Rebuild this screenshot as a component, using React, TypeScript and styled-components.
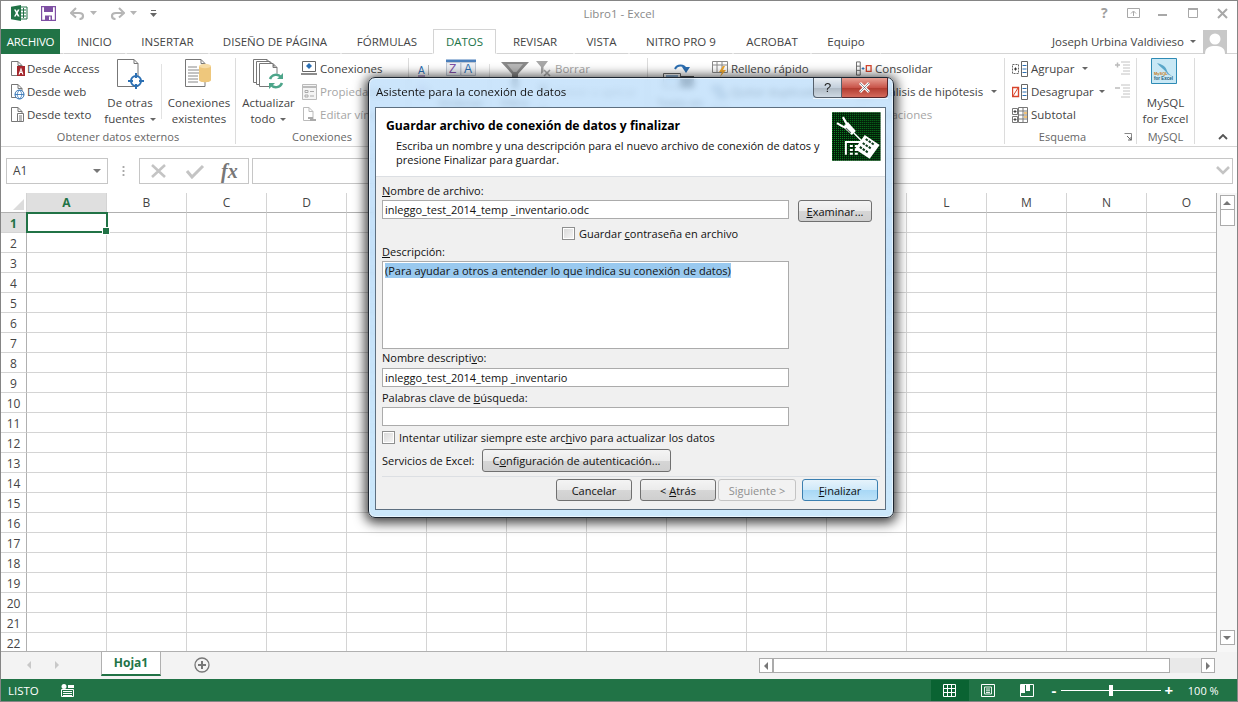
import React from "react";
import styled, { createGlobalStyle } from "styled-components";

const Global = createGlobalStyle`
  html, body { margin: 0; padding: 0; background: #fff; }
  * { box-sizing: border-box; }
  #root { width: 1238px; height: 702px; }
`;

const UI = `"Open Sans", "Noto Sans", "Liberation Sans", sans-serif`;

const Page = styled.div`
  position: relative; width: 1238px; height: 702px; overflow: hidden;
  border: 1px solid #858585; display: flex; flex-direction: column; background: #fff;
  font-family: ${UI}; font-size: 11.5px; color: #444;
`;
const TitleBar = styled.div`
  height: 24px; flex: none; display: grid; grid-template-columns: 1fr auto 1fr; align-items: center;
`;
const Qat = styled.div`display: flex; align-items: center; padding-left: 10px; height: 100%;`;
const QatSlot = styled.span<{ $w: number }>`width: ${p => p.$w}px; display: flex; align-items: center; flex: none;`;
const AppTitle = styled.div`color: #8a8a8a; font-size: 11.5px;`;
const WinControls = styled.div`display: flex; justify-content: flex-end; align-items: center; height: 100%;`;
const WinSlot = styled.span`width: 29.5px; display: flex; justify-content: center; align-items: center; color: #a0a0a0;`;
const HelpGlyph = styled.span`font-weight: 700; font-size: 14px; line-height: 1;`;

const TabRow = styled.div`
  height: 29px; flex: none; display: flex; align-items: flex-end; border-bottom: 1px solid #d4d4d4; position: relative;
`;
const FileTab = styled.div`
  width: 59px; height: 25px; margin-bottom: -1px; background: #217346; color: #fff; margin-right: 3px;
  display: flex; align-items: center; justify-content: center; font-size: 11.5px; letter-spacing: -.2px;
`;
const Tab = styled.div<{ $w: number; $active?: boolean }>`
  width: ${p => p.$w}px; height: 25px; margin-bottom: -1px; flex: none;
  display: flex; align-items: center; justify-content: center; font-size: 11.5px; color: ${p => (p.$active ? "#217346" : "#444")};
  background: #fff;
  border: 1px solid ${p => (p.$active ? "#d4d4d4" : "transparent")};
  border-bottom: 1px solid ${p => (p.$active ? "#fff" : "#d4d4d4")};
`;
const User = styled.div`
  margin-left: auto; display: flex; align-items: center; height: 25px; margin-bottom: -1px; padding-right: 10px; gap: 1px; color: #444; font-size: 11.5px;
`;
const Avatar = styled.div`width: 24px; height: 24px; background: #c8c8c8; overflow: hidden; margin-left: 6px;`;

const Ribbon = styled.div`
  height: 93px; flex: none; display: flex; border-bottom: 1px solid #d4d4d4; padding-top: 4px; background: #fff;
`;
const Group = styled.div<{ $w: number }>`
  width: ${p => p.$w}px; flex: none; display: flex; flex-direction: column; height: 86px; border-right: 1px solid #dcdcdc;
`;
const GroupBody = styled.div<{ $pad?: number }>`
  height: 71px; display: flex; padding-left: ${p => p.$pad ?? 0}px;
`;
const GroupLabel = styled.div<{ $pr?: number }>`
  height: 15px; line-height: 15px; text-align: center; color: #666; font-size: 11px; position: relative; white-space: nowrap; padding-right: ${p => p.$pr ?? 0}px;
`;
const Launcher = styled.span`position: absolute; right: 4px; top: 4px; display: flex;`;
const SmallCol = styled.div<{ $w: number }>`width: ${p => p.$w}px; flex: none; display: flex; flex-direction: column; margin-top: -1px;`;
const SmallItem = styled.div<{ $off?: boolean; $gap?: number }>`
  height: 23px; display: flex; align-items: center; gap: ${p => p.$gap ?? 3}px; white-space: nowrap; color: ${p => (p.$off ? "#a6a6a6" : "#444")};
`;
const Caret = styled.span<{ $ml?: number }>`
  display: inline-block; width: 0; height: 0; border: 3px solid transparent; border-top: 3px solid #666; border-bottom: 0; margin-left: ${p => p.$ml ?? 5}px; vertical-align: middle;
`;
const IconBox = styled.span`width: 16px; height: 17px; flex: none; display: flex; align-items: center; justify-content: center;`;
const Big = styled.div<{ $w: number; $off?: boolean }>`
  width: ${p => p.$w}px; flex: none; display: flex; flex-direction: column; align-items: center; line-height: 16px; text-align: center; white-space: nowrap;
  color: ${p => (p.$off ? "#a6a6a6" : "#444")};
`;
const BigIcon = styled.span<{ $shift?: number }>`height: 37px; display: flex; align-items: flex-start; justify-content: center; margin-right: ${p => p.$shift ?? 0}px;`;
const Thin = styled.div<{ $ml: number; $mr?: number }>`
  width: 1px; height: 55px; margin: 6px ${p => p.$mr ?? 0}px 0 ${p => p.$ml}px; background: #e2e2e2; flex: none;
`;
const Collapse = styled.div`margin-left: auto; align-self: flex-end; margin-right: 9px; margin-bottom: 3px;`;

const FormulaBar = styled.div`
  height: 46px; flex: none; display: flex; align-items: center; padding-left: 5px; padding-top: 1px; background: #fff;
`;
const NameBox = styled.div`
  width: 102px; height: 26px; background: #fff; border: 1px solid #c6c6c6; display: flex; align-items: center; justify-content: space-between; padding: 0 6px 0 6px; font-size: 12px;
`;
const Dots = styled.div`
  width: 3px; height: 11px; margin: 0 14px 0 14px; background: radial-gradient(circle, #a8a8a8 1px, transparent 1.2px) 0 0 / 3px 4px;
`;
const FxBox = styled.div`
  width: 110px; height: 26px; border: 1px solid #c6c6c6; display: flex; align-items: center; justify-content: space-around; padding: 0 2px; margin-right: 3px; flex: none;
`;
const FxText = styled.span`font-family: "Liberation Serif", serif; font-style: italic; font-weight: 700; font-size: 20px; color: #777; line-height: 1;`;
const FormulaInput = styled.div`
  width: 981px; height: 26px; border: 1px solid #c6c6c6; display: flex; align-items: center; justify-content: flex-end; padding-right: 2px; flex: none;
`;

const SheetArea = styled.div`height: 459px; flex: none; display: flex;`;
const Sheet = styled.div`
  width: 1216px; height: 459px; overflow: hidden; position: relative; display: grid; grid-template-columns: 26px repeat(15, 80px); grid-auto-rows: 20px;
  border-bottom: 1px solid #b0b0b0; border-right: 1px solid #b0b0b0; color: #444;
`;
const Corner = styled.div`
  border-bottom: 1px solid #b0b0b0; border-right: 1px solid #d4d4d4; position: relative;
  &::after { content: ""; position: absolute; right: 2px; bottom: 2px; width: 0; height: 0; border-style: solid; border-width: 0 0 11px 11px; border-color: transparent transparent #dcdcdc transparent; }
`;
const ColHead = styled.div<{ $sel?: boolean }>`
  display: flex; align-items: center; justify-content: center; font-size: 12px;
  background: ${p => (p.$sel ? "#dfdfdf" : "#fff")}; color: ${p => (p.$sel ? "#217346" : "#444")}; font-weight: ${p => (p.$sel ? 700 : 400)};
  border-right: 1px solid #d4d4d4; border-bottom: 1px solid ${p => (p.$sel ? "#217346" : "#b0b0b0")};
`;
const RowHead = styled.div<{ $sel?: boolean }>`
  display: flex; align-items: center; justify-content: center; font-size: 12px; padding-top: 1px;
  background: ${p => (p.$sel ? "#dfdfdf" : "#fff")}; color: ${p => (p.$sel ? "#217346" : "#444")}; font-weight: ${p => (p.$sel ? 700 : 400)};
  border-right: 1px solid ${p => (p.$sel ? "#217346" : "#b0b0b0")}; border-bottom: 1px solid #d4d4d4;
`;
const Cell = styled.div`border-right: 1px solid #d4d4d4; border-bottom: 1px solid #d4d4d4;`;
const ActiveCell = styled.div`
  position: relative; border: 2px solid #217346; margin: -1px 0 0 -1px; width: 82px; height: 21px; z-index: 1;
  &::after { content: ""; position: absolute; right: -4px; bottom: -4px; width: 6px; height: 6px; background: #217346; border: 1px solid #fff; }
`;
const VScroll = styled.div`
  width: 20px; height: 459px; display: flex; flex-direction: column; align-items: center; padding: 2px 0 7px; background: #f7f7f7;
`;
const ScrollBtn = styled.div<{ $h?: number; $w?: number }>`
  width: ${p => p.$w ?? 15}px; height: ${p => p.$h ?? 15}px; border: 1px solid #ababab; background: #fff; display: flex; align-items: center; justify-content: center; flex: none;
`;
const VThumb = styled.div`width: 15px; flex: none; border: 1px solid #ababab; border-top: 0; background: #fff; height: 16px;`;
const VTrack = styled.div`flex: 1;`;
const ArrowU = styled.span`width: 0; height: 0; border: 4px solid transparent; border-bottom: 4px solid #777; border-top: 0;`;
const ArrowD = styled.span`width: 0; height: 0; border: 4px solid transparent; border-top: 4px solid #777; border-bottom: 0;`;
const ArrowL = styled.span<{ $c?: string }>`width: 0; height: 0; border: 4px solid transparent; border-right: 4px solid ${p => p.$c ?? "#777"}; border-left: 0;`;
const ArrowR = styled.span<{ $c?: string }>`width: 0; height: 0; border: 4px solid transparent; border-left: 4px solid ${p => p.$c ?? "#777"}; border-right: 0;`;

const TabBar = styled.div`
  height: 27px; flex: none; display: flex; align-items: flex-start; background: #f3f3f3;
`;
const NavArrows = styled.div`width: 100px; height: 25px; display: flex; align-items: center; gap: 24px; padding-left: 26px;`;
const SheetTab = styled.div`
  width: 60px; height: 25px; background: #fff; border-left: 1px solid #b0b0b0; border-right: 1px solid #b0b0b0; border-bottom: 2px solid #217346; margin-top: -1px;
  color: #217346; font-weight: 700; font-size: 12px; display: flex; align-items: center; justify-content: center;
`;
const AddSheet = styled.div`width: 84px; height: 25px; display: flex; align-items: center; padding-left: 33px;`;
const HScrollWrap = styled.div`
  margin-left: 514px; margin-top: 5px; display: flex; align-items: center; height: 17px;
`;
const HTrack = styled.div`width: 397px; height: 15px; background: #fff; border: 1px solid #ababab;`;
const HRest = styled.div`width: 31px; height: 15px; background: #e9e9e9;`;

const Status = styled.div`
  height: 22px; flex: none; background: #217346; color: #fff; display: flex; align-items: center; padding-left: 7px; font-size: 11.5px;
`;
const StatusIcon = styled.span`margin-left: 22px; display: flex;`;
const ViewBtn = styled.div<{ $on?: boolean; $ml: number; $w: number }>`
  width: ${p => p.$w}px; height: 21px; margin-left: ${p => p.$ml}px; display: flex; align-items: center; justify-content: center; background: ${p => (p.$on ? "#0a6332" : "transparent")}; flex: none;
`;
const Slider = styled.div`width: 100px; height: 1px; background: #fff; position: relative; margin: 0 3px 0 2px; flex: none;`;
const Thumb = styled.span`position: absolute; left: 48px; top: -5px; width: 4px; height: 11px; background: #fff;`;
const ZoomSign = styled.span<{ $ml?: number }>`font-weight: 700; font-size: 15px; line-height: 1; width: 10px; text-align: center; flex: none; margin-left: ${p => p.$ml ?? 0}px;`;
const ZoomVal = styled.span`margin-left: 14px; font-size: 11px; white-space: nowrap;`;

/* dialog */
const Dialog = styled.div`
  position: absolute; left: 367px; top: 76px; width: 526px; height: 441px; z-index: 5;
  border: 1px solid #1c2530; border-radius: 7px;
  background: linear-gradient(180deg, rgba(186,220,250,.74), rgba(176,214,246,.74) 40%, rgba(196,228,250,.88));
  backdrop-filter: blur(3px);
  box-shadow: 0 2px 12px 3px rgba(0,0,0,.75), inset 0 0 0 1px rgba(255,255,255,.55);
  padding: 0 7px 7px 6px; display: flex; flex-direction: column;
`;
const DialogTitle = styled.div`
  height: 29px; flex: none; display: flex; justify-content: space-between; color: #111; font-size: 11.5px;
`;
const DialogTitleText = styled.span`padding-top: 6px; padding-left: 1px;`;
const Caption = styled.div`display: flex; height: 20px; margin-right: -2px; box-shadow: 0 1px 0 rgba(255,255,255,.7);`;
const HelpBtn = styled.div`
  width: 29px; height: 20px; background: linear-gradient(#e8eef4, #c4d0dc 50%, #aeb9c4 52%, #cfd9e3); border: 1px solid #55606c; border-top: 0; border-radius: 0 0 0 4px;
  color: #222; font-size: 13px; display: flex; align-items: center; justify-content: center; font-family: "Liberation Sans", sans-serif;
`;
const CloseBtn = styled.div`
  width: 46px; height: 20px; background: linear-gradient(#e8a094, #c9554a 50%, #b03a2e 52%, #d46a5c); border: 1px solid #55252a; border-top: 0; border-left: 0; border-radius: 0 0 4px 0;
  display: flex; align-items: center; justify-content: center;
`;
const Inner = styled.div`
  flex: 1; border: 1px solid #5d6f80; background: #f0f0f0; color: #111; font-size: 11px; display: flex; flex-direction: column;
`;
const WizHead = styled.div`
  height: 69px; flex: none; background: #fff; border-bottom: 1px solid #dcdfe3; display: flex; justify-content: space-between; padding: 4px 4px 0 10px;
`;
const WizText = styled.div`width: 450px;`;
const WizTitle = styled.div`font-weight: 700; font-size: 12.2px; line-height: 16px; margin-top: 6px; color: #000; white-space: nowrap;`;
const WizDesc = styled.div`margin-left: 10px; margin-top: 5px; line-height: 14px; white-space: nowrap; font-size: 11px;`;
const Form = styled.div`padding: 0 5px 0 6px; flex: 1; display: flex; flex-direction: column;`;
const Label = styled.div<{ $mt: number }>`height: 14px; line-height: 14px; margin-top: ${p => p.$mt}px; white-space: nowrap; u { text-underline-offset: 1px; }`;
const Field = styled.input<{ $mt: number }>`
  display: block; width: 407px; height: 19px; margin: ${p => p.$mt}px 0 0; border: 1px solid #ababab; background: #fff; padding: 0 2px; font: inherit; color: #111; outline: none;
`;
const FieldRow = styled.div`display: flex; align-items: flex-start; gap: 9px;`;
const Win7Btn = styled.div<{ $w: number; $off?: boolean; $def?: boolean; $mt?: number; $ml?: number; $h?: number }>`
  width: ${p => p.$w}px; height: ${p => p.$h ?? 22}px; flex: none; margin-top: ${p => p.$mt ?? 0}px; margin-left: ${p => p.$ml ?? 0}px;
  border: 1px solid ${p => (p.$off ? "#c4c4c4" : p.$def ? "#3b7fb0" : "#707070")}; border-radius: 3px;
  background: ${p => p.$off ? "#f2f2f2" : p.$def ? "linear-gradient(#e6f3fb, #cfe9f9 50%, #a8d8f6 52%, #bde2f8)" : "linear-gradient(#f4f4f4, #ebebeb 50%, #d6d6d6 52%, #cfcfcf)"};
  color: ${p => (p.$off ? "#8f8f8f" : "#111")};
  display: flex; align-items: center; justify-content: center; white-space: nowrap;
`;
const CheckRow = styled.div<{ $mt: number; $ml: number }>`
  display: flex; align-items: center; gap: 4px; height: 14px; margin-top: ${p => p.$mt}px; margin-left: ${p => p.$ml}px; white-space: nowrap;
`;
const Check = styled.span`
  width: 13px; height: 13px; flex: none; border: 1px solid #8e8f8f; background: linear-gradient(135deg, #d8d8d8, #f6f6f6); box-shadow: inset 0 0 0 1px #fff;
`;
const TextArea = styled.div`
  width: 407px; height: 88px; margin-top: 2px; border: 1px solid #ababab; background: #fff; padding: 1px 2px; line-height: 15px;
`;
const Selected = styled.span`background: #99c9ef; color: #111;`;
const ServiceRow = styled.div`display: flex; align-items: center; margin-top: 5px; height: 23px;`;
const ServiceLabel = styled.span`width: 100px; flex: none; white-space: nowrap;`;
const Divider = styled.div`height: 1px; background: #dcdfe3; margin-top: 4px;`;
const Footer = styled.div`display: flex; justify-content: flex-end; margin-top: 2px; padding-right: 2px;`;

const S = (p: { w: number; h: number; children: React.ReactNode }) => (
  <svg width={p.w} height={p.h} viewBox={`0 0 ${p.w} ${p.h}`} fill="none">{p.children}</svg>
);

const Doc = ({ x = 0, y = 0, w = 11, h = 14, c = "#777" }) => (
  <path d={`M${x + .5} ${y + .5}H${x + w - 4}L${x + w} ${y + 4.5}V${y + h - .5}H${x + .5}ZM${x + w - 4} ${y + .5}V${y + 4.5}H${x + w}`} stroke={c} fill="#fff" />
);

const ExcelLogo = () => (
  <S w={17} h={16}>
    <path d="M9 2h7v12H9z" fill="#fff" stroke="#217346" />
    <path d="M10 5h5M10 8h5M10 11h5M12.5 3v10" stroke="#217346" />
    <path d="M0 1.8 10 0v16L0 14.2z" fill="#217346" />
    <path d="M3 4.5h1.8l1 2.1 1-2.1h1.7L6.7 8l1.9 3.6H6.8L5.7 9.4l-1 2.2H3L4.9 8z" fill="#fff" />
  </S>
);
const SaveIcon = () => (
  <S w={15} h={15}>
    <path d="M.5.5h14v14H.5z" fill="#fff" stroke="#7e4fa3" strokeWidth="1.4" />
    <path d="M3 1h9v5H3z" fill="#7e4fa3" />
    <path d="M4 9.5h7V14H4z" fill="#7e4fa3" /><path d="M8 10.5h1.5V14H8z" fill="#fff" />
  </S>
);
const UndoIcon = () => (
  <S w={15} h={13}>
    <path d="M2.5 6H9c2.5 0 4 1.3 4 3s-1 3-3.5 3" stroke="#b5b5b5" strokeWidth="2.2" />
    <path d="M6 1 1 6l5 4.500" stroke="#b5b5b5" strokeWidth="2" />
  </S>
);
const RedoIcon = () => (
  <S w={15} h={13}>
    <path d="M12.5 6H6C3.500 6 2 7.300 2 9s1 3 3.500 3" stroke="#b5b5b5" strokeWidth="2.2" />
    <path d="m9 1 5 5-5 4.500" stroke="#b5b5b5" strokeWidth="2" />
  </S>
);
const MiniCaret = () => <svg width="7" height="4" viewBox="0 0 7 4"><path d="M0 0h7L3.5 4z" fill="#b5b5b5" /></svg>;
const QatCustom = () => <svg width="7" height="7" viewBox="0 0 7 7"><path d="M1 0h5v1H1zM0 3h7L3.5 7z" fill="#666" /></svg>;

const WinIcons = [
  <HelpGlyph key="h">?</HelpGlyph>,
  <S key="r" w={13} h={10}><path d="M.5.5h12v9H.5z" stroke="#a8a8a8" /><path d="M6.5 8V3.5M4 5.500l2.500-2.500 2.500 2.500" stroke="#a8a8a8" /></S>,
  <S key="m" w={10} h={10}><path d="M0 7h9" stroke="#a8a8a8" strokeWidth="2" /></S>,
  <S key="x" w={10} h={10}><path d="M.5.5h9v9h-9z" stroke="#a8a8a8" /><path d="M0 1h10" stroke="#a8a8a8" strokeWidth="2" /></S>,
  <S key="c" w={11} h={11}><path d="m1 1 9 9M10 1l-9 9" stroke="#a8a8a8" strokeWidth="2" /></S>,
];

const Ic = {
  access: <S w={15} h={17}><Doc x={1} y={1} w={11} h={15} /><path d="M7 6h8v10H7z" fill="#a4262c" /><path d="m11 7.500-2.500 7h1.300l.4-1.500h1.600l.4 1.500h1.300zm-.4 4.300.4-2 .4 2z" fill="#fff" /></S>,
  web: <S w={15} h={17}><Doc x={1} y={1} w={11} h={14} /><circle cx="9.5" cy="11.5" r="4.5" fill="#fff" stroke="#2b6fb3" /><path d="M5 11.500h9M9.500 7c-3 3-3 6 0 9M9.500 7c3 3 3 6 0 9" stroke="#2b6fb3" strokeWidth=".8" /></S>,
  text: <S w={15} h={17}><Doc x={1} y={1} w={11} h={15} /><path d="M7.500 7.500h6v8h-6z" fill="#fff" stroke="#777" /><path d="M9 10h3M9 12h3M9 14h3" stroke="#777" /></S>,
  conn: <S w={16} h={15}><path d="M1.500.500h13v10h-13z" stroke="#666" fill="#fff" /><path d="M0 13h16" stroke="#666" strokeWidth="1.5" /><path d="M8 2l3 3-3 3-3-3z" fill="#2b6fb3" /></S>,
  props: <S w={15} h={16}><path d="M.5.5h14v15H.5z" stroke="#bbb" fill="#f4f4f4" /><path d="M1 3h13" stroke="#bbb" strokeWidth="2" /><path d="M3 6.500h3v2H3zM3 11h3v2H3z" stroke="#aaa" /><path d="M8 7.500h4M8 12h4" stroke="#aaa" /></S>,
  links: <S w={15} h={17}><Doc x={1} y={1} w={10} h={14} c="#bbb" /><path d="M6 12h5M8 14h6" stroke="#aaa" strokeWidth="2" /></S>,
  borrar: <S w={16} h={16}><path d="M0 0h12L7.500 6v5L5 13V6z" fill="#a8a8a8" /><path d="m8 9 6 6m0-6-6 6" stroke="#a8a8a8" strokeWidth="1.6" /></S>,
  filter2: <S w={16} h={16}><path d="M1 1h12L8.500 7v7L5.500 12V7z" fill="#b8b8b8" /></S>,
  flash: <S w={16} h={16}><path d="M.5.500h15v11H.5zM.5 4h15M5 .500v11M10 .500v11" stroke="#8a8a8a" /><path d="M11 5l-4 6h3l-2 5 6-7h-3l2-4z" fill="#f0a830" /></S>,
  dup: <S w={16} h={16}><path d="M.5 1.500h9v6h-9zM5.500 8.500h9v6h-9z" stroke="#777" fill="#fff" /><path d="M1 4.500h8M6 11.500h8" stroke="#2b6fb3" /></S>,
  valid: <S w={16} h={16}><path d="M.5 1.500h15v13H.5zM.5 6h15M5.500 1.500v13" stroke="#888" fill="#fff" /><path d="m7 10 2 2 4-4" stroke="#217346" strokeWidth="1.5" /></S>,
  cons: <S w={17} h={15}><path d="M.5.500h4v14h-4zM.5 5h4M.5 9.500h4" stroke="#666" /><path d="M6 7.500h3M7.500 6v3" stroke="#2b6fb3" /><path d="M11 4.500h5v6h-5z" stroke="#d8452c" strokeWidth="1.4" /></S>,
  hypo: <S w={16} h={15}><path d="M.5.500h15v13H.5zM.5 5h15M5.500.500v13" stroke="#888" /><path d="M8 7h5v4H8z" fill="#2b6fb3" /></S>,
  rel: <S w={16} h={15}><path d="M1 2h5v4H1zM10 9h5v4h-5zM6 4h3v7h1" stroke="#bbb" /></S>,
  group: <S w={16} h={16}><path d="M.5 3.500h6v9h-6z" stroke="#666" fill="#fff" strokeDasharray="2 1" /><path d="M9.500.500h6v15h-6z" stroke="#666" fill="#fff" /><path d="M2 8h3M3.500 6.500v3" stroke="#333" /><path d="M10.500 4.500h4M10.500 8h4M10.500 11.500h4" stroke="#2b6fb3" /></S>,
  ungroup: <S w={16} h={16}><path d="M.5 3.500h6v9h-6z" stroke="#d8452c" fill="#fff" strokeWidth="1.4" /><path d="M1 12 6 4" stroke="#d8452c" /><path d="M9.500.500h6v15h-6z" stroke="#666" fill="#fff" /><path d="M10.500 4.500h4M10.500 8h4M10.500 11.500h4" stroke="#2b6fb3" /></S>,
  subtotal: <S w={16} h={16}><path d="M.5 1.500h5v6h-5zM.5 9.500h5v6h-5zM6.500.500h9v15h-9zM6.500 4h9M6.500 8h9M6.500 12h9M11 .500v15" stroke="#777" fill="#fff" /><path d="M1.500 4.500h3M3 3v3M1.500 12.500h3M3 11v3" stroke="#444" /><path d="M12 5h3v2h-3zM12 9h3v2h-3z" fill="#f0c27a" /></S>,
  showD: <S w={15} h={15}><path d="M0 4h5M2.500 1.500v5" stroke="#bbb" strokeWidth="1.5" /><path d="M6 1h9M8 4h7M8 7h7M8 10h7M6 13h9" stroke="#c2c2c2" /></S>,
  hideD: <S w={15} h={15}><path d="M0 4h5" stroke="#bbb" strokeWidth="1.5" /><path d="M6 1h9M8 4h7M8 7h7M8 10h7M6 13h9" stroke="#c2c2c2" /></S>,
};

const BigOther = (
  <S w={30} h={34}>
    <Doc x={2} y={1} w={21} h={28} c="#777" />
    <circle cx="21" cy="23" r="5" fill="#fff" stroke="#2b6fb3" strokeWidth="2" />
    <path d="M21 15v5M21 26v5M13 23h5M24 23h5" stroke="#2b6fb3" strokeWidth="2" />
  </S>
);
const BigExisting = (
  <S w={30} h={34}>
    <Doc x={1} y={1} w={20} h={28} c="#777" />
    <path d="M4 9h9M4 12h13M4 15h13M4 18h10M4 21h10M4 24h10" stroke="#888" />
    <path d="M15 8v14c0 3 12 3 12 0V8z" fill="#eec77c" />
    <ellipse cx="21" cy="8" rx="6" ry="2.200" fill="#f6dca6" />
  </S>
);
const BigRefresh = (
  <S w={34} h={34}>
    <Doc x={1} y={1} w={18} h={24} c="#777" />
    <Doc x={4} y={3} w={18} h={24} c="#777" />
    <Doc x={7} y={5} w={18} h={24} c="#777" />
    <circle cx="24" cy="23" r="7.5" fill="#fff" />
    <path d="M18 21a6.500 6.500 0 0 1 11-2" stroke="#4da58a" strokeWidth="2.5" />
    <path d="M30 25a6.500 6.500 0 0 1-11 2" stroke="#4da58a" strokeWidth="2.5" />
    <path d="M31 15v6h-6zM17 31v-6h6z" fill="#4da58a" />
  </S>
);
const SortAZ = <S w={16} h={16}><text x="3" y="13" fontSize="10" fill="#2b6fb3" fontFamily="Liberation Sans">A</text><path d="M3 15h7" stroke="#7e4fa3" /><path d="M13.500 4v10" stroke="#bbb" /></S>;
const SortZA = <S w={16} h={16}><text x="3" y="10" fontSize="10" fill="#7e4fa3" fontFamily="Liberation Sans">Z</text><path d="M3 12h7" stroke="#2b6fb3" /><path d="M13.500 2v10M11.500 10l2 3 2-3" stroke="#888" /></S>;
const SortBig = (
  <svg width="30" height="34" viewBox="0 0 30 34" fill="none">
    <path d="M0 3h30" stroke="#4a7ebb" strokeWidth="3" />
    <path d="M.5 4.500h14v13H.5zM15 4.500h14.500v13H15z" fill="#eef1f6" stroke="#c0c8d4" />
    <text x="3" y="15" fontSize="12" fill="#7e4fa3" fontFamily="Liberation Sans">Z</text>
    <text x="18" y="15" fontSize="12" fill="#2b6fb3" fontFamily="Liberation Sans">A</text>
  </svg>
);
const Funnel = (
  <S w={30} h={36}>
    <path d="M1 4h28L18 16v16l-6-3V16z" fill="#8a8a8a" />
    <path d="M7 6h16l-6.500 8h-3z" fill="#b8b8b8" />
  </S>
);
const TextCols = (
  <S w={34} h={36}>
    <path d="M12 11a6 6 0 0 1 11 0" stroke="#2b6fb3" strokeWidth="2" /><path d="M19 9h8l-4 6z" fill="#2b6fb3" />
    <path d="M.5 15.500h17v14H.5z" stroke="#666" fill="#fff" /><path d="M3 18h12M3 21h12" stroke="#2b6fb3" />
    <path d="M18 18h13v12H18z" fill="#555" />
  </S>
);
const MySqlIcon = (
  <S w={26} h={26}>
    <path d="M.5.500h25v25H.5z" fill="#c9e8f5" stroke="#2e8bb5" />
    <path d="M6 5c4 1 9 3 10 8 1 2 3 4 5 5-3-1-5-2-6-4-2-3-6-5-9-9z" fill="#5aa6c8" />
    <text x="3" y="17" fontSize="4" fontWeight="700" fill="#c77b20" fontFamily="Liberation Sans">MySQL</text>
    <text x="3" y="22" fontSize="4.500" fontWeight="700" fill="#1c5b7a" fontFamily="Liberation Sans">for Excel</text>
  </S>
);
const DialogIcon = (
  <svg width="49" height="49" viewBox="0 0 49 49">
    <defs>
      <pattern id="dots" width="2" height="2" patternUnits="userSpaceOnUse">
        <rect width="2" height="2" fill="#021a08" /><rect width="1" height="1" fill="#0b8a22" />
      </pattern>
    </defs>
    <rect width="49" height="49" fill="url(#dots)" />
    <path d="m6 13 5-3M10 7 7 12" stroke="#fff" strokeWidth="0" />
    <path d="m5 11 7 4M11 5l4 7" stroke="#fff" strokeWidth="2.200" />
    <path d="m11 15 5-5 8 9-4 4z" fill="#fff" />
    <path d="m14 16 5 5" stroke="#5a6a60" strokeWidth="1.200" />
    <path d="m22 21 9 9" stroke="#fff" strokeWidth="1.500" />
    <path d="M14 43V30h16" stroke="#fff" strokeWidth="2" fill="none" />
    <path d="M18 33h3v2h-3zM23 33h3v2h-3zM18 37h3v2h-3zM23 37h3v2h-3zM18 41h3v2h-3zM23 41h3v2h-3z" fill="#fff" />
    <path d="m33 23 15 10-10 14-15-10z" fill="#fff" />
    <path d="m34 27 2 1.500m1 .500 2 1.500m1 .500 2 1.500M31 31l2 1.500m1 .500 2 1.500m1 .500 2 1.500M28 35l2 1.500m1 .500 2 1.500m1 .500 2 1.500" stroke="#0a3a18" strokeWidth="2" />
  </svg>
);

const TABS: [string, number][] = [
  ["INICIO", 63], ["INSERTAR", 83], ["DISEÑO DE PÁGINA", 132], ["FÓRMULAS", 92], ["DATOS", 63],
  ["REVISAR", 78], ["VISTA", 55], ["NITRO PRO 9", 104], ["ACROBAT", 78], ["Equipo", 70],
];
const COLS = "ABCDEFGHIJKLMNO".split("");
const ROWS = Array.from({ length: 22 }, (_, i) => i + 1);

export default function App() {
  return (
    <Page>
      <Global />
      <TitleBar>
        <Qat>
          <QatSlot $w={30}><ExcelLogo /></QatSlot>
          <QatSlot $w={29}><SaveIcon /></QatSlot>
          <QatSlot $w={20}><UndoIcon /></QatSlot>
          <QatSlot $w={20}><MiniCaret /></QatSlot>
          <QatSlot $w={20}><RedoIcon /></QatSlot>
          <QatSlot $w={20}><MiniCaret /></QatSlot>
          <QatSlot $w={10}><QatCustom /></QatSlot>
        </Qat>
        <AppTitle>Libro1 - Excel</AppTitle>
        <WinControls>{WinIcons.map((w, i) => <WinSlot key={i}>{w}</WinSlot>)}</WinControls>
      </TitleBar>
      <TabRow>
        <FileTab>ARCHIVO</FileTab>
        {TABS.map(([t, w]) => <Tab key={t} $w={w} $active={t === "DATOS"}>{t}</Tab>)}
        <User>
          <span>Joseph Urbina Valdivieso</span>
          <Caret />
          <Avatar>
            <S w={24} h={24}>
              <circle cx="12" cy="9" r="5.5" fill="#fff" />
              <path d="M2 24c0-7 5-8 10-8s10 1 10 8z" fill="#fff" />
            </S>
          </Avatar>
        </User>
      </TabRow>
      <Ribbon>
        <Group $w={235}>
          <GroupBody $pad={8}>
            <SmallCol $w={96}>
              <SmallItem $gap={2}><IconBox>{Ic.access}</IconBox>Desde Access</SmallItem>
              <SmallItem $gap={2}><IconBox>{Ic.web}</IconBox>Desde web</SmallItem>
              <SmallItem $gap={2}><IconBox>{Ic.text}</IconBox>Desde texto</SmallItem>
            </SmallCol>
            <Big $w={50}><BigIcon>{BigOther}</BigIcon>De otras<span>fuentes<Caret /></span></Big>
            <Thin $ml={6} />
            <Big $w={74}><BigIcon>{BigExisting}</BigIcon>Conexiones<span>existentes</span></Big>
          </GroupBody>
          <GroupLabel>Obtener datos externos</GroupLabel>
        </Group>
        <Group $w={173}>
          <GroupBody>
            <Big $w={65}><BigIcon>{BigRefresh}</BigIcon>Actualizar<span>todo<Caret /></span></Big>
            <SmallCol $w={105}>
              <SmallItem><IconBox>{Ic.conn}</IconBox>Conexiones</SmallItem>
              <SmallItem $off><IconBox>{Ic.props}</IconBox>Propiedades</SmallItem>
              <SmallItem $off><IconBox>{Ic.links}</IconBox>Editar vínculos</SmallItem>
            </SmallCol>
          </GroupBody>
          <GroupLabel>Conexiones</GroupLabel>
        </Group>
        <Group $w={239}>
          <GroupBody $pad={6}>
            <SmallCol $w={24}>
              <SmallItem><IconBox>{SortAZ}</IconBox></SmallItem>
              <SmallItem><IconBox>{SortZA}</IconBox></SmallItem>
            </SmallCol>
            <Big $w={44}><BigIcon>{SortBig}</BigIcon>Ordenar</Big>
            <Thin $ml={6} $mr={4} />
            <Big $w={42}><BigIcon>{Funnel}</BigIcon>Filtro</Big>
            <SmallCol $w={110}>
              <SmallItem $off><IconBox>{Ic.borrar}</IconBox>Borrar</SmallItem>
              <SmallItem $off><IconBox>{Ic.filter2}</IconBox>Volver a aplicar</SmallItem>
              <SmallItem><IconBox>{Ic.filter2}</IconBox>Avanzadas</SmallItem>
            </SmallCol>
          </GroupBody>
          <GroupLabel>Ordenar y filtrar</GroupLabel>
        </Group>
        <Group $w={357}>
          <GroupBody>
            <Big $w={64}><BigIcon>{TextCols}</BigIcon>Texto en<span>columnas</span></Big>
            <SmallCol $w={144}>
              <SmallItem><IconBox>{Ic.flash}</IconBox>Relleno rápido</SmallItem>
              <SmallItem><IconBox>{Ic.dup}</IconBox>Quitar duplicados</SmallItem>
              <SmallItem><IconBox>{Ic.valid}</IconBox>Validación de datos</SmallItem>
            </SmallCol>
            <SmallCol $w={145}>
              <SmallItem><IconBox>{Ic.cons}</IconBox>Consolidar</SmallItem>
              <SmallItem><IconBox>{Ic.hypo}</IconBox>Análisis de hipótesis<Caret /></SmallItem>
              <SmallItem $off><IconBox>{Ic.rel}</IconBox>Relaciones</SmallItem>
            </SmallCol>
          </GroupBody>
          <GroupLabel>Herramientas de datos</GroupLabel>
        </Group>
        <Group $w={132}>
          <GroupBody $pad={7}>
            <SmallCol $w={103}>
              <SmallItem><IconBox>{Ic.group}</IconBox>Agrupar<Caret $ml={5} /></SmallItem>
              <SmallItem><IconBox>{Ic.ungroup}</IconBox>Desagrupar<Caret $ml={2} /></SmallItem>
              <SmallItem><IconBox>{Ic.subtotal}</IconBox>Subtotal</SmallItem>
            </SmallCol>
            <SmallCol $w={16}>
              <SmallItem>{Ic.showD}</SmallItem>
              <SmallItem>{Ic.hideD}</SmallItem>
            </SmallCol>
          </GroupBody>
          <GroupLabel $pr={16}>
            Esquema
            <Launcher>
              <S w={8} h={8}><path d="M.5.500h7v7" stroke="#888" /><path d="M3 3l4 4M4 7h3V4" stroke="#666" /></S>
            </Launcher>
          </GroupLabel>
        </Group>
        <Group $w={58}>
          <GroupBody>
            <Big $w={57}><BigIcon $shift={4}>{MySqlIcon}</BigIcon>MySQL<span>for Excel</span></Big>
          </GroupBody>
          <GroupLabel>MySQL</GroupLabel>
        </Group>
        <Collapse>
          <S w={10} h={6}><path d="m1 5 4-4 4 4" stroke="#555" strokeWidth="1.8" /></S>
        </Collapse>
      </Ribbon>
      <FormulaBar>
        <NameBox>A1<ArrowD /></NameBox>
        <Dots />
        <FxBox>
          <S w={18} h={16}><path d="m2 2 13 12M15 2 2 14" stroke="#c4c4c4" strokeWidth="2.6" /></S>
          <S w={20} h={16}><path d="m2 8 5 6L18 3" stroke="#c4c4c4" strokeWidth="3" /></S>
          <FxText>fx</FxText>
        </FxBox>
        <FormulaInput>
          <S w={14} h={9}><path d="m1 1 6 6 6-6" stroke="#c4c4c4" strokeWidth="2.6" /></S>
        </FormulaInput>
      </FormulaBar>
      <SheetArea>
        <Sheet>
          <Corner />
          {COLS.map(c => <ColHead key={c} $sel={c === "A"}>{c}</ColHead>)}
          {ROWS.flatMap(r => [
            <RowHead key={`r${r}`} $sel={r === 1}>{r}</RowHead>,
            ...COLS.map(c => (r === 1 && c === "A" ? <ActiveCell key="a1" /> : <Cell key={c + r} />)),
          ])}
        </Sheet>
        <VScroll>
          <ScrollBtn><ArrowU /></ScrollBtn>
          <VThumb />
          <VTrack />
          <ScrollBtn><ArrowD /></ScrollBtn>
        </VScroll>
      </SheetArea>
      <TabBar>
        <NavArrows><ArrowL $c="#c8c8c8" /><ArrowR $c="#c8c8c8" /></NavArrows>
        <SheetTab>Hoja1</SheetTab>
        <AddSheet>
          <S w={16} h={16}><circle cx="8" cy="8" r="7" stroke="#777" strokeWidth="1.3" fill="#f3f3f3" /><path d="M4 8h8M8 4v8" stroke="#777" strokeWidth="2" /></S>
        </AddSheet>
        <HScrollWrap>
          <ScrollBtn $w={14}><ArrowL /></ScrollBtn>
          <HTrack />
          <HRest />
          <ScrollBtn $w={14}><ArrowR /></ScrollBtn>
        </HScrollWrap>
      </TabBar>
      <Status>
        LISTO
        <StatusIcon>
          <S w={13} h={13}><path d="M.5 5.500h12v7H.5z" stroke="#fff" /><path d="M2 7.500h9M2 9.500h9M2 11.500h9" stroke="#fff" /><circle cx="3" cy="2.500" r="2.500" fill="#fff" /><path d="M7 1h6v3H7z" fill="#fff" /></S>
        </StatusIcon>
        <ViewBtn $on $w={38} $ml={857}>
          <S w={13} h={13}><path d="M.5.500h12v12H.5zM.5 4.500h12M.5 8.500h12M4.500.500v12M8.500.500v12" stroke="#fff" /></S>
        </ViewBtn>
        <ViewBtn $w={38} $ml={0}>
          <S w={14} h={13}><path d="M.5.500h13v12H.5z" stroke="#fff" /><path d="M3.500 3h7v7h-7zM5 5h4M5 6.800h4M5 8.500h4" stroke="#fff" strokeWidth=".9" /></S>
        </ViewBtn>
        <ViewBtn $w={38} $ml={1}>
          <S w={14} h={13}><path d="M.5.500h13v12H.5z" stroke="#fff" /><path d="M1 1h4v8H1zM6 1h4v6H6z" fill="#fff" /></S>
        </ViewBtn>
        <ZoomSign $ml={3}>-</ZoomSign>
        <Slider><Thumb /></Slider>
        <ZoomSign>+</ZoomSign>
        <ZoomVal>100 %</ZoomVal>
      </Status>

      <Dialog>
        <DialogTitle>
          <DialogTitleText>Asistente para la conexión de datos</DialogTitleText>
          <Caption>
            <HelpBtn>?</HelpBtn>
            <CloseBtn>
              <S w={13} h={11}><path d="m2 1 9 9m0-9-9 9" stroke="#fff" strokeWidth="2.8" /><path d="m2 1 9 9m0-9-9 9" stroke="#3b4a55" strokeWidth=".6" /></S>
            </CloseBtn>
          </Caption>
        </DialogTitle>
        <Inner>
          <WizHead>
            <WizText>
              <WizTitle>Guardar archivo de conexión de datos y finalizar</WizTitle>
              <WizDesc>
                Escriba un nombre y una descripción para el nuevo archivo de conexión de datos y<br />
                presione Finalizar para guardar.
              </WizDesc>
            </WizText>
            {DialogIcon}
          </WizHead>
          <Form>
            <Label $mt={7}><u>N</u>ombre de archivo:</Label>
            <FieldRow>
              <Field $mt={2} readOnly defaultValue="inleggo_test_2014_temp _inventario.odc" />
              <Win7Btn $w={74} $mt={2}><span><u>E</u>xaminar...</span></Win7Btn>
            </FieldRow>
            <CheckRow $mt={4} $ml={180}><Check /><span>Guardar <u>c</u>ontraseña en archivo</span></CheckRow>
            <Label $mt={5}><u>D</u>escripción:</Label>
            <TextArea><Selected>(Para ayudar a otros a entender lo que indica su conexión de datos)</Selected></TextArea>
            <Label $mt={2}>Nombre descripti<u>v</u>o:</Label>
            <Field $mt={3} readOnly defaultValue="inleggo_test_2014_temp _inventario" />
            <Label $mt={4}>Palabras clave de <u>b</u>úsqueda:</Label>
            <Field $mt={2} readOnly defaultValue="" />
            <CheckRow $mt={4} $ml={0}><Check /><span>Intentar utilizar siempre este arc<u>h</u>ivo para actualizar los datos</span></CheckRow>
            <ServiceRow>
              <ServiceLabel>Servicios de Excel:</ServiceLabel>
              <Win7Btn $w={189} $h={23}><span>C<u>o</u>nfiguración de autenticación...</span></Win7Btn>
            </ServiceRow>
            <Divider />
            <Footer>
              <Win7Btn $w={76}>Cancelar</Win7Btn>
              <Win7Btn $w={76} $ml={8}><span>&lt; <u>A</u>trás</span></Win7Btn>
              <Win7Btn $w={78} $ml={2} $off>Siguiente &gt;</Win7Btn>
              <Win7Btn $w={76} $ml={6} $def><span><u>F</u>inalizar</span></Win7Btn>
            </Footer>
          </Form>
        </Inner>
      </Dialog>
    </Page>
  );
}
